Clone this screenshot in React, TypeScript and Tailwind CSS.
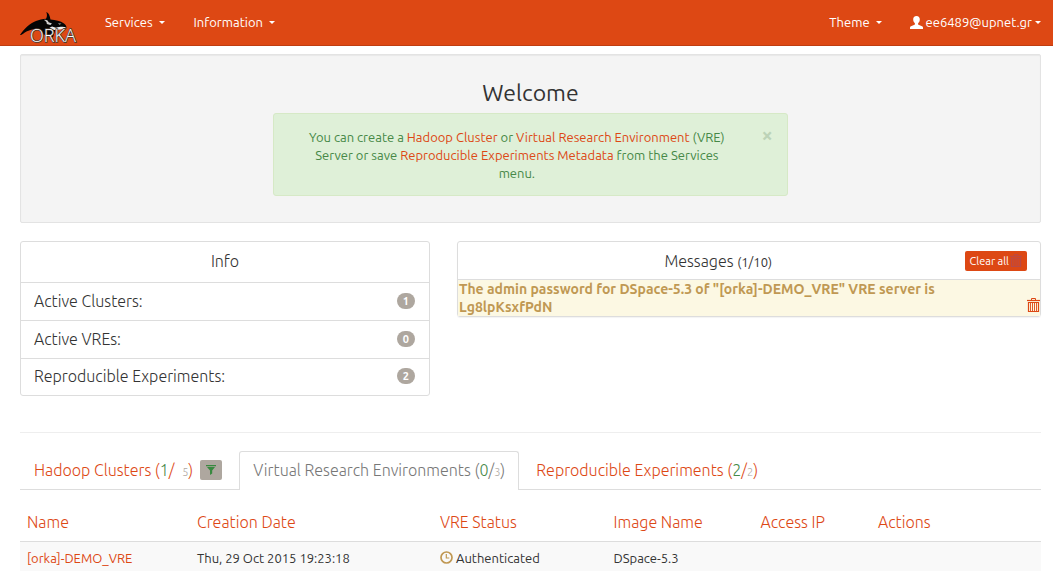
import type { ReactNode } from 'react';

function Caret() {
  return (
    <svg className="h-[3px] w-[6px] shrink-0" viewBox="0 0 6 3" aria-hidden="true">
      <path d="M0 0h6L3 3z" fill="currentColor" />
    </svg>
  );
}

function UserIcon() {
  return (
    <svg className="h-[13px] w-[13px] shrink-0" viewBox="0 0 13 13" aria-hidden="true">
      <path
        d="M6.500 0C4.300 0 3.200 1.300 3.200 3.200c0 1.600.5 3 1.500 3.800.4.500.4 1.400-.2 1.700L1 10.300c-.7.300-1 .7-1 1.400V13h13v-1.300c0-.7-.3-1.100-1-1.400L8.500 8.700c-.6-.3-.6-1.200-.2-1.700 1-.8 1.500-2.200 1.500-3.800C9.800 1.300 8.700 0 6.500 0z"
        fill="currentColor"
      />
    </svg>
  );
}

function TrashIcon({ className }: { className: string }) {
  return (
    <svg className={className} viewBox="0 0 13 14" fill="none" stroke="currentColor" aria-hidden="true">
      <path d="M4.500 2V.5h4V2" />
      <path d="M0 2.500h13" strokeWidth="1.200" />
      <path d="M1.500 4.500h10v9h-10z" strokeWidth="1.200" />
      <path d="M3.500 5v8M5.500 5v8M7.500 5v8M9.500 5v8" strokeWidth=".9" />
    </svg>
  );
}

function FilterIcon() {
  return (
    <svg className="h-[10px] w-[10px]" viewBox="0 0 10 10" fill="currentColor" aria-hidden="true">
      <path d="M0 0h10v1.200H0zM1 2h8L6.200 5.500V8.500L4 10V5.500z" />
    </svg>
  );
}

function ClockIcon() {
  return (
    <svg className="h-[13px] w-[13px] shrink-0 text-[#c09853]" viewBox="0 0 13 13" fill="none" stroke="currentColor" aria-hidden="true">
      <circle cx="6.5" cy="6.5" r="5.500" strokeWidth="1.700" />
      <path d="M6.300 3v4h3" strokeWidth="1.200" />
    </svg>
  );
}

function Logo() {
  return (
    <svg className="h-[33px] w-[59px] overflow-visible" viewBox="0 0 59 33" role="img" aria-label="ORKA">
      <path
        d="M0 24C4 18 10 12 16 10c3-1.200 6.500-2 10-2.200C27.500 5.500 27 3 26.300 1c2.700 1 3.500 4 4.200 7.500 5 .3 10 1.500 13.500 4 1.600 1.200 2.700 3 2.500 4.200-2 1.300-7 1.800-11 1.500l-2.500 8-10-3-6-5.700C10 18.500 6 20.500 3.500 22.500c-1 .9-2.500 1.700-3.500 1.500z"
        fill="#050505"
      />
      <path d="M24 9c1.800-.5 3.800.2 4.600 2.200l3.400 1.300-1.600 1.500-3.600-1c.2-1.700-1-3.200-2.800-4z" fill="#d0d0d0" />
      <path d="M46.300 16.300c-3.300-1-7.300-.5-10.300.5l-4-1.300-2.500 1.300 4.500 2.200c4.500 0 9.300-.5 12.300-2.700z" fill="#ececec" />
      <path d="M38 12.500l3.500.2-2 .9z" fill="#fff" />
      <text
        x="10"
        y="31"
        fontFamily="Open Sans, sans-serif"
        fontSize="18"
        fontWeight="300"
        fill="#fff"
        stroke="#4a3a33"
        strokeWidth="1.500"
        paintOrder="stroke"
      >
        ORKA
      </text>
    </svg>
  );
}

function NavButton({ children }: { children: ReactNode }) {
  return (
    <button type="button" className="flex cursor-pointer items-center gap-[6px] text-white">
      {children}
      <Caret />
    </button>
  );
}

const stats = [
  { label: 'Active Clusters:', value: 1 },
  { label: 'Active VREs:', value: 0 },
  { label: 'Reproducible Experiments:', value: 2 },
];

const columns = [
  { label: 'Name', width: 'w-[16.65%]' },
  { label: 'Creation Date', width: 'w-[23.8%]' },
  { label: 'VRE Status', width: 'w-[17%]' },
  { label: 'Image Name', width: 'w-[14.4%]' },
  { label: 'Access IP', width: 'w-[11.5%]' },
  { label: 'Actions', width: 'w-auto' },
];

export default function App() {
  return (
    <div className="min-h-screen bg-white font-['Ubuntu','Noto_Sans',sans-serif] text-[13px] leading-[18px] text-[#333333]">
      <nav className="flex h-[46px] items-center border-b border-[#bf3d11] bg-[#dd4814] pr-3 pb-px pl-5 text-[13px] text-white">
        <a href="#home" className="mt-[11px] mr-[26px]">
          <Logo />
        </a>
        <div className="flex gap-[29px]">
          <NavButton>Services</NavButton>
          <NavButton>Information</NavButton>
        </div>
        <div className="ml-auto flex gap-[28px]">
          <NavButton>Theme</NavButton>
          <button type="button" className="flex cursor-pointer items-center gap-[3px]">
            <UserIcon />
            ee6489@upnet.gr
            <Caret />
          </button>
        </div>
      </nav>

      <main className="pt-2 pr-3 pl-5">
        <section className="rounded-xs border border-[#e3e3e3] bg-[#f4f4f4] px-6 pt-[25px] pb-[26px] shadow-[inset_0_1px_1px_rgba(0,0,0,0.05)]">
          <h1 className="text-center text-[23px] leading-[26px]">Welcome</h1>
          <div className="mx-auto mt-[7px] flex w-[53%] items-start rounded-[3px] border border-[#d6e9c6] bg-[#dff0d8] px-[14px] pt-[14px] pb-[13px] text-[#468847]">
            <p className="flex-1 pr-7 pl-3 text-center">
              You can create a <a href="#cluster" className="text-[#dd4814]">Hadoop Cluster</a> or{' '}
              <a href="#vre" className="text-[#dd4814]">Virtual Research Environment</a> (VRE) Server or save{' '}
              <a href="#experiments" className="text-[#dd4814]">Reproducible Experiments Metadata</a> from the Services menu.
            </p>
            <button type="button" aria-label="Close" className="cursor-pointer text-[20px] leading-[14px] font-bold text-[#bcd3b7]">
              ×
            </button>
          </div>
        </section>

        <div className="mt-[18px] grid grid-cols-[410fr_584fr] items-start gap-[27px]">
          <section className="rounded-[3px] border border-[#dddddd] text-base font-light">
            <h2 className="h-10 pt-[9px] text-center leading-5">Info</h2>
            <ul>
              {stats.map((stat) => (
                <li
                  key={stat.label}
                  className="flex h-[38px] items-center justify-between border-t border-[#dddddd] pr-[14px] pb-[2px] pl-[13px] last:h-[37px]"
                >
                  <span>{stat.label}</span>
                  <span className="rounded-full bg-[#aea79f] px-[6px] text-[11px] leading-4 font-bold text-white">{stat.value}</span>
                </li>
              ))}
            </ul>
          </section>

          <section className="rounded-[3px] border border-[#dddddd] shadow-[0_1px_1px_rgba(0,0,0,0.05)]">
            <div className="flex h-[37px] items-center pr-[13px]">
              <h2 className="flex-1 pl-[14px] text-center text-base font-light">
                Messages <span className="text-[13px] font-normal">(1/10)</span>
              </h2>
              <button
                type="button"
                className="flex h-5 cursor-pointer items-center rounded-xs bg-[#dd4814] px-[5px] text-[11px] text-white"
              >
                Clear all
                <TrashIcon className="ml-px h-[13px] w-[12px] text-[#b94a48]" />
              </button>
            </div>
            <div className="flex items-end border-t border-[#dddddd] bg-[#fcf8e3] pl-px">
              <p className="flex-1 pr-9 text-[14px] font-bold text-[#c09853]">
                The admin password for DSpace-5.3 of "[orka]-DEMO_VRE" VRE server is Lg8lpKsxfPdN
              </p>
              <button type="button" aria-label="Delete message" className="mb-1 cursor-pointer text-[#dd4814]">
                <TrashIcon className="h-[14px] w-[13px]" />
              </button>
            </div>
          </section>
        </div>

        <hr className="mt-9 border-[#eeeeee]" />

        <div className="mt-[18px] flex h-[39px] items-end border-b border-[#dddddd] text-base font-light">
          <div className="flex h-[38px] items-center pr-[17px] pl-[14px]">
            <a href="#clusters" className="text-[#dd4814]">
              Hadoop Clusters (<span className="text-[#468847]">1</span>/ <span className="ml-1 text-[11px] text-[#aea79f]">5</span>)
            </a>
            <button
              type="button"
              aria-label="Filter clusters"
              className="ml-[7px] flex h-5 w-[22px] cursor-pointer items-center justify-center rounded-xs bg-[#aea79f] text-[#38893f]"
            >
              <FilterIcon />
            </button>
          </div>
          <a
            href="#vres"
            className="-mb-px flex h-[39px] items-center rounded-t-[3px] border border-b-0 border-[#dddddd] bg-white px-[13px] pb-[2px] text-[#777777]"
          >
            <span>
              Virtual Research Environments (<span className="text-[#468847]">0</span>/
              <span className="text-[11px] text-[#aea79f]">3</span>)
            </span>
          </a>
          <a href="#experiments" className="flex h-[38px] items-center px-[17px] text-[#dd4814]">
            <span>
              Reproducible Experiments (<span className="text-[#468847]">2</span>/
              <span className="text-[11px] text-[#aea79f]">2</span>)
            </span>
          </a>
        </div>

        <table className="mt-[13px] w-full table-fixed border-collapse text-left">
          <thead>
            <tr className="h-[38px] border-b border-[#dddddd] text-base text-[#dd4814]">
              {columns.map((column) => (
                <th key={column.label} scope="col" className={`px-[7px] font-light ${column.width}`}>
                  {column.label}
                </th>
              ))}
            </tr>
          </thead>
          <tbody>
            <tr className="h-[33px] bg-[#f9f9f9]">
              <td className="px-[7px]">
                <a href="#demo-vre" className="text-[#dd4814]">[orka]-DEMO_VRE</a>
              </td>
              <td className="px-[7px]">Thu, 29 Oct 2015 19:23:18</td>
              <td className="px-[7px]">
                <span className="flex items-center gap-[3px]">
                  <ClockIcon />
                  Authenticated
                </span>
              </td>
              <td className="px-[7px]">DSpace-5.3</td>
              <td />
              <td />
            </tr>
          </tbody>
        </table>
      </main>
    </div>
  );
}
